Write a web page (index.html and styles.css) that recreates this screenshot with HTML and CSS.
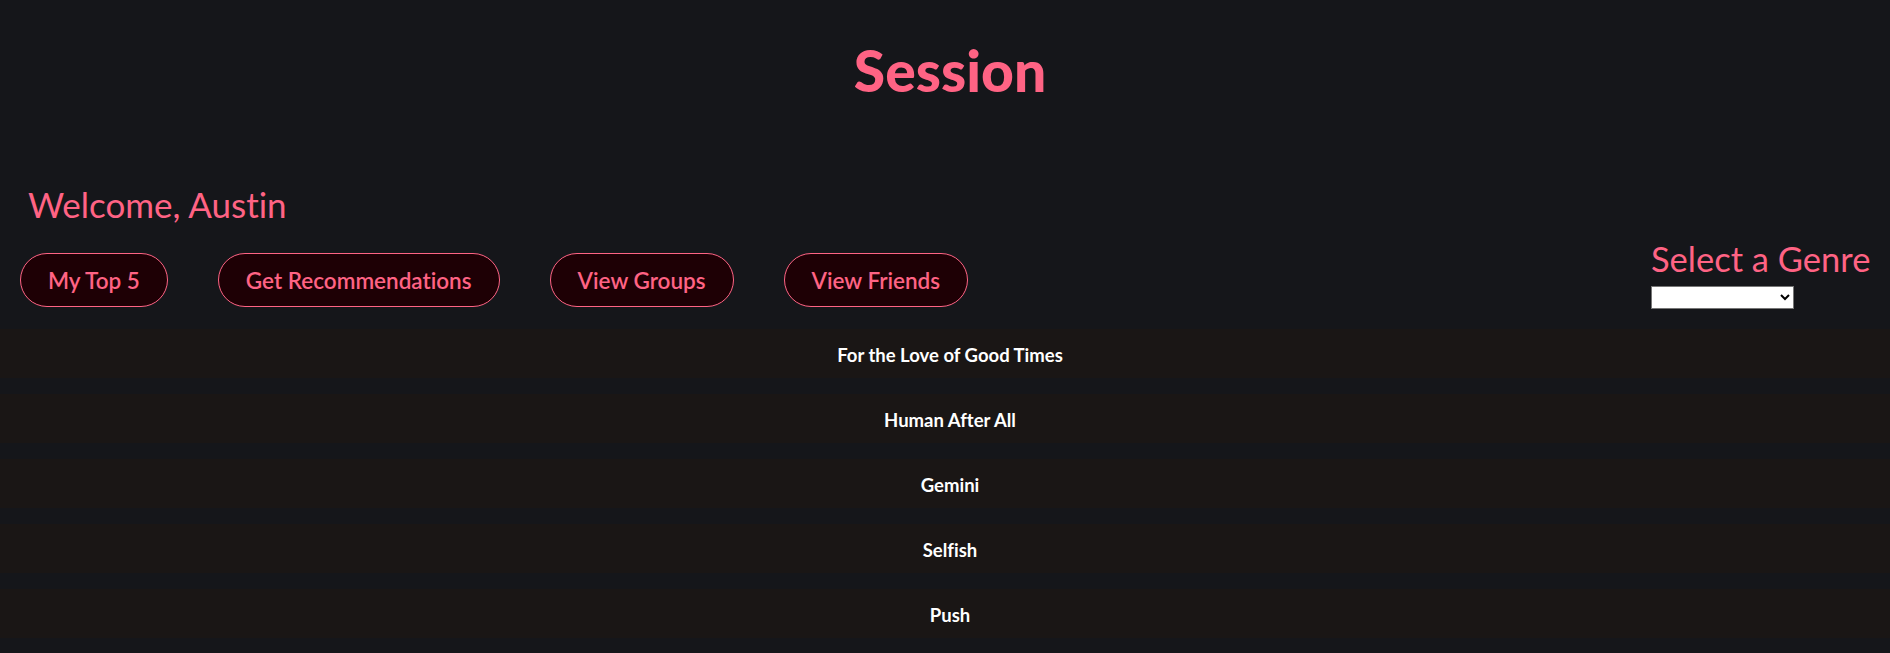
FILE: index.html
```html
<!DOCTYPE html>
<html lang="en">
<head>
<meta charset="utf-8">
<title>Session</title>
<link rel="stylesheet" href="styles.css">
</head>
<body>
<header class="header">
  <h1 class="title">Session</h1>
</header>
<section class="top">
  <div class="left">
    <h2 class="welcome">Welcome, Austin</h2>
    <nav class="nav">
      <button class="pill">My Top 5</button>
      <button class="pill">Get Recommendations</button>
      <button class="pill">View Groups</button>
      <button class="pill">View Friends</button>
    </nav>
  </div>
  <div class="genre">
    <h3 class="genre-title">Select a Genre</h3>
    <select class="genre-select"><option></option></select>
  </div>
</section>
<section class="tracks">
  <div class="track">For the Love of Good Times</div>
  <div class="track">Human After All</div>
  <div class="track">Gemini</div>
  <div class="track">Selfish</div>
  <div class="track">Push</div>
</section>
</body>
</html>
```
FILE: styles.css
```css
html, body {
  margin: 0;
  padding: 0;
  background: #15161a;
}
body {
  font-family: Lato, "Noto Sans", "Liberation Sans", sans-serif;
  font-variant-ligatures: none;
  color: #ff6384;
  height: 653px;
  overflow: hidden;
}
.header {
  padding-left: 10px;
  text-align: center;
}
.title {
  margin: 42px 0 0;
  font-size: 57px;
  line-height: 57px;
  font-weight: 900;
  color: #ff6384;
}
.top {
  display: flex;
  justify-content: space-between;
  align-items: flex-end;
  margin-top: 87px;
  padding: 0 18px 0 20px;
}
.welcome {
  margin: 0 0 0 8px;
  font-size: 35px;
  line-height: 36px;
  font-weight: 400;
}
.nav {
  display: flex;
  gap: 50px;
  margin-top: 31px;
}
.pill {
  height: 54px;
  padding: 0 27px;
  border: 1px solid #ff6384;
  border-radius: 27px;
  background: #1e0005;
  color: #ff6384;
  font-family: Lato, "Noto Sans", sans-serif;
  font-variant-ligatures: none;
  font-size: 22.5px;
  font-weight: 600;
  cursor: pointer;
}
.genre {
  display: flex;
  flex-direction: column;
  align-items: flex-start;
  margin-bottom: -2px;
  width: 221px;
}
.genre-title {
  margin: 0 0 11px;
  font-size: 34.5px;
  line-height: 32px;
  font-weight: 400;
  white-space: nowrap;
}
.genre-select {
  width: 143px;
  height: 23px;
  background: #fff;
  border: 1px solid #767676;
  border-radius: 0;
  margin: 0;
}
.tracks {
  display: flex;
  flex-direction: column;
  gap: 16px;
  margin-top: 22px;
}
.track {
  height: 49px;
  box-sizing: border-box;
  display: flex;
  align-items: center;
  justify-content: center;
  padding: 2px 0 0 10px;
  background: #1a1615;
  color: #fff;
  font-size: 18.5px;
  font-weight: 700;
}
```
